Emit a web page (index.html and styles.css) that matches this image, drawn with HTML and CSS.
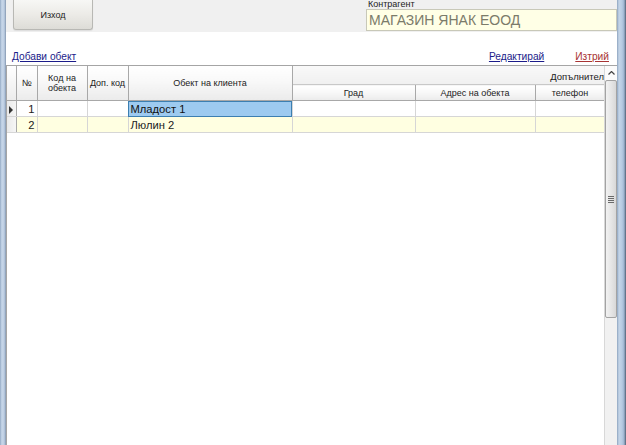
FILE: index.html
```html
<!DOCTYPE html>
<html>
<head>
<meta charset="utf-8">
<link rel="stylesheet" href="styles.css">
</head>
<body>
<div class="window">
  <div class="frame-left"></div>
  <div class="content">
    <div class="toolbar">
      <button class="btn">Изход</button>
      <div class="party">
        <div class="party-label">Контрагент</div>
        <div class="party-box">МАГАЗИН ЯНАК ЕООД</div>
      </div>
    </div>
    <div class="links">
      <a class="link add">Добави обект</a>
      <div class="links-right">
        <a class="link edit">Редактирай</a>
        <a class="link del">Изтрий</a>
      </div>
    </div>
    <div class="grid">
      <div class="grid-body">
        <table class="table">
          <colgroup>
            <col class="c-rh"><col class="c-no"><col class="c-code"><col class="c-dop"><col class="c-obj"><col class="c-city"><col class="c-addr"><col class="c-tel">
          </colgroup>
          <thead>
            <tr class="h1">
              <th rowspan="2" class="rh"></th>
              <th rowspan="2">№</th>
              <th rowspan="2">Код на<br>обекта</th>
              <th rowspan="2">Доп. код</th>
              <th rowspan="2">Обект на клиента</th>
              <th colspan="3" class="group"><span class="group-text">Допълнител</span></th>
            </tr>
            <tr class="h2">
              <th>Град</th>
              <th>Адрес на обекта</th>
              <th>телефон</th>
            </tr>
          </thead>
          <tbody>
            <tr class="row">
              <td class="rh"><span class="arrow"></span></td>
              <td class="num">1</td>
              <td></td>
              <td></td>
              <td class="sel">Младост 1</td>
              <td></td><td></td><td></td>
            </tr>
            <tr class="row alt">
              <td class="rh"></td>
              <td class="num">2</td>
              <td></td>
              <td></td>
              <td>Люлин 2</td>
              <td></td><td></td><td></td>
            </tr>
          </tbody>
        </table>
      </div>
      <div class="vscroll">
        <div class="sc-up">
          <svg width="7" height="4" viewBox="0 0 7 4"><path d="M0.5 3.5 L3.5 0.5 L6.5 3.5" fill="none" stroke="#444" stroke-width="1.2"/></svg>
        </div>
        <div class="sc-thumb"><span class="grip"></span></div>
        <div class="sc-track"></div>
      </div>
    </div>
  </div>
  <div class="frame-right"></div>
</div>
</body>
</html>
```
FILE: styles.css
```css
html, body {
  margin: 0;
  padding: 0;
  width: 626px;
  height: 445px;
  overflow: hidden;
  background: #ffffff;
  font-family: "Liberation Sans", Arial, sans-serif;
}
.window {
  display: flex;
  width: 626px;
  height: 445px;
}
.frame-left {
  width: 6px;
  flex: none;
  background: linear-gradient(to right, #8aa1bd 0, #b9cbe0 1px, #c9d8ea 3px, #a9bcd4 5px, #7d8fa6 6px);
}
.frame-right {
  width: 9px;
  flex: none;
  background: linear-gradient(to right, #8ea4bf 0, #c4d5e8 2px, #b7cbe2 5px, #9fb5d0 7px, #4f5f73 9px);
}
.content {
  flex: 1;
  display: flex;
  flex-direction: column;
  min-width: 0;
}
.toolbar {
  height: 32px;
  flex: none;
  background: #f0f0f0;
  display: flex;
  justify-content: space-between;
  align-items: flex-start;
}
.btn {
  margin: 0 0 0 7px;
  width: 80px;
  height: 30px;
  border: 1px solid #b8b8b4;
  border-top: none;
  border-radius: 0 0 3px 3px;
  background: linear-gradient(to bottom, #f7f7f5 0%, #ecebe7 50%, #dddcd7 100%);
  font-family: "Liberation Sans", Arial, sans-serif;
  font-size: 9px;
  color: #222;
  padding: 0;
  box-shadow: 0 1px 1px rgba(0,0,0,0.08);
}
.party {
  width: 251px;
  display: flex;
  flex-direction: column;
}
.party-label {
  font-size: 9px;
  line-height: 9px;
  color: #222;
  padding-left: 2px;
}
.party-box {
  height: 20px;
  border: 1px solid #c8c8b8;
  background: #ffffe6;
  color: #7b7b6a;
  font-size: 14px;
  line-height: 20px;
  padding-left: 2px;
}
.links {
  height: 33px;
  flex: none;
  display: flex;
  justify-content: space-between;
  align-items: flex-end;
  font-size: 10.2px;
  padding: 0 8px 2px 6px;
  box-sizing: border-box;
}
.links-right {
  display: flex;
  gap: 31px;
}
.link {
  text-decoration: underline;
  line-height: 13px;
}
.add, .edit { color: #1c1c8a; }
.del { color: #a83434; }
.grid {
  flex: 1;
  display: flex;
  border-top: 1px solid #a5a5a5;
  min-height: 0;
}
.grid-body {
  flex: 1;
  overflow: hidden;
  min-width: 0;
  border-left: 1px solid #a5a5a5;
}
.table {
  border-collapse: collapse;
  table-layout: fixed;
  width: 598px;
  font-size: 9px;
  color: #222;
}
.c-rh { width: 9px; }
.c-no { width: 21px; }
.c-code { width: 50px; }
.c-dop { width: 41px; }
.c-obj { width: 164px; }
.c-city { width: 123px; }
.c-addr { width: 120px; }
.c-tel { width: 70px; }
th {
  font-weight: normal;
  border: 1px solid #a8a8a8;
  border-top: none;
  background: linear-gradient(to bottom, #ffffff 0%, #f7f7f7 50%, #ebebeb 100%);
  padding: 0 1px;
  text-align: center;
  line-height: 10px;
  overflow: hidden;
  white-space: nowrap;
}
.h1 th { height: 34px; }
.h1 th.group {
  height: 18px;
  text-align: right;
  padding-right: 1px;
  border-right: none;
  border-bottom: 1px solid #c8c8c8;
  background: linear-gradient(to bottom, #f9f9f9, #f0f0f0);
}
.h2 th { height: 15px; }
.group-text { display: inline-block; padding-top: 3px; font-size: 9.5px; }
th.rh { border-left: none; background: linear-gradient(to bottom, #ffffff, #ececec); }
td {
  height: 15px;
  border: 1px solid #d6d6d6;
  padding: 0 2px;
  font-size: 11.2px;
  line-height: 14px;
  white-space: nowrap;
  overflow: hidden;
}
td.num { text-align: right; font-size: 11.2px; }
td.rh {
  border-left: none;
  background: linear-gradient(to right, #e9e9e9, #f6f6f6);
  border-right: 1px solid #a8a8a8;
  padding: 0;
  text-align: center;
}
.alt td { background: #ffffe1; }
.alt td.rh { background: linear-gradient(to right, #e9e9e9, #f6f6f6); }
td.sel {
  background: #9dcaf0;
  outline: 1px solid #3c7fb1;
  outline-offset: -1px;
  color: #111;
}
.arrow {
  display: inline-block;
  width: 0;
  height: 0;
  border-left: 4px solid #333;
  border-top: 4px solid transparent;
  border-bottom: 4px solid transparent;
  vertical-align: middle;
}
.vscroll {
  width: 12px;
  flex: none;
  display: flex;
  flex-direction: column;
  background: #f0f0f0;
  border-left: 1px solid #d8d8d8;
}
.sc-up {
  height: 14px;
  flex: none;
  background: #fbfbfb;
  display: flex;
  justify-content: center;
  align-items: flex-start;
  padding-top: 5px;
  box-sizing: border-box;
}
.sc-up svg { display: block; }
.sc-thumb {
  height: 236px;
  flex: none;
  border: 1px solid #a3a3a3;
  border-radius: 2px;
  background: linear-gradient(to right, #f2f2f2, #e6e6e6 50%, #d8d8d8);
  display: flex;
  align-items: center;
  justify-content: center;
}
.grip {
  width: 6px;
  height: 7px;
  background: repeating-linear-gradient(to bottom, #6a6a6a 0, #6a6a6a 1px, transparent 1px, transparent 2px);
}
.sc-track {
  flex: 1;
  background: #f1f1f1;
}
```
